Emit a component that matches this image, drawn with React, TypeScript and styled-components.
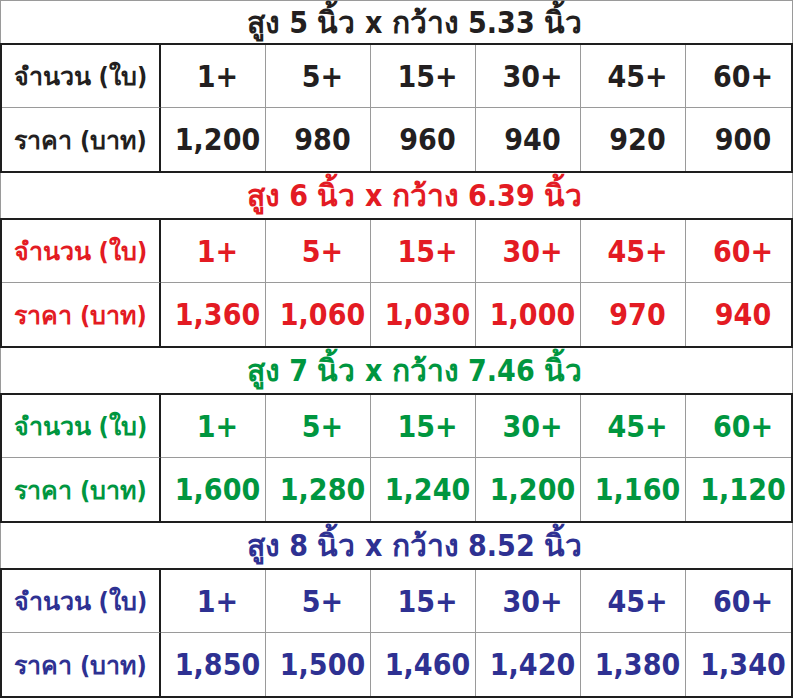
import React from "react";
import styled, { createGlobalStyle } from "styled-components";

const GlobalStyle = createGlobalStyle`
    html, body {
        margin: 0;
        padding: 0;
        background: #ffffff;
    }
`;

const FONT = `"DejaVu Sans Condensed", "DejaVu Sans", "Noto Sans", Tahoma, sans-serif`;

interface Tone {
    tone: string;
}

const Page = styled.div`
    width: 793px;
    height: 700px;
    box-sizing: border-box;
    display: flex;
    flex-direction: column;
    background: white;
    font-family: ${FONT};
    font-weight: bold;
`;

const Section = styled.section`
    display: flex;
    flex-direction: column;
`;

const Title = styled('div')<Tone & { first?: boolean }>`
    height: ${(p) => (p.first ? "43px" : "45px")};
    box-sizing: border-box;
    border-left: 1px solid #9a9a9a;
    border-right: 1px solid #9a9a9a;
    border-top: ${(p) => (p.first ? "1px solid #9a9a9a" : "none")};
    display: flex;
    align-items: center;
    justify-content: center;
    padding-left: 36px;
    color: ${(p) => p.tone};
    font-size: 30px;
    white-space: nowrap;
`;

const Table = styled.div`
    display: grid;
    grid-template-columns: 159px repeat(6, 1fr);
    grid-template-rows: 63px 63px;
    border: 2px solid #1e1e1e;
    box-sizing: border-box;
    width: 793px;
`;

const Cell = styled('div')<Tone & { top?: boolean }>`
    display: flex;
    align-items: center;
    justify-content: center;
    padding-left: 9px;
    box-sizing: border-box;
    border-right: 1px solid #9a9a9a;
    border-bottom: ${(p) => (p.top ? "1px solid #9a9a9a" : "none")};
    color: ${(p) => p.tone};
    font-size: 30px;
    white-space: nowrap;

    &:last-child, &:nth-child(7) {
        border-right: none;
    }
`;

const Label = styled(Cell)`
    border-right: 2px solid #1e1e1e;
    padding-left: 0;
    font-size: 25px;
`;

interface Size {
    title: string;
    tone: string;
    prices: string[];
}

const counts = ["1+", "5+", "15+", "30+", "45+", "60+"];

const sizes: Size[] = [
    {
        title: "สูง 5 นิ้ว x กว้าง 5.33 นิ้ว",
        tone: "#231f20",
        prices: ["1,200", "980", "960", "940", "920", "900"],
    },
    {
        title: "สูง 6 นิ้ว x กว้าง 6.39 นิ้ว",
        tone: "#e31b23",
        prices: ["1,360", "1,060", "1,030", "1,000", "970", "940"],
    },
    {
        title: "สูง 7 นิ้ว x กว้าง 7.46 นิ้ว",
        tone: "#00963f",
        prices: ["1,600", "1,280", "1,240", "1,200", "1,160", "1,120"],
    },
    {
        title: "สูง 8 นิ้ว x กว้าง 8.52 นิ้ว",
        tone: "#2e3192",
        prices: ["1,850", "1,500", "1,460", "1,420", "1,380", "1,340"],
    },
];

export default function App() {
    return (
        <>
            <GlobalStyle />
            <Page>
                {sizes.map((s, i) => (
                    <Section key={s.title}>
                        <Title tone={s.tone} first={i === 0}>{s.title}</Title>
                        <Table>
                            <Label tone={s.tone} top>จำนวน (ใบ)</Label>
                            {counts.map((c) => (
                                <Cell key={c} tone={s.tone} top>{c}</Cell>
                            ))}
                            <Label tone={s.tone}>ราคา (บาท)</Label>
                            {s.prices.map((p, j) => (
                                <Cell key={j} tone={s.tone}>{p}</Cell>
                            ))}
                        </Table>
                    </Section>
                ))}
            </Page>
        </>
    );
}
